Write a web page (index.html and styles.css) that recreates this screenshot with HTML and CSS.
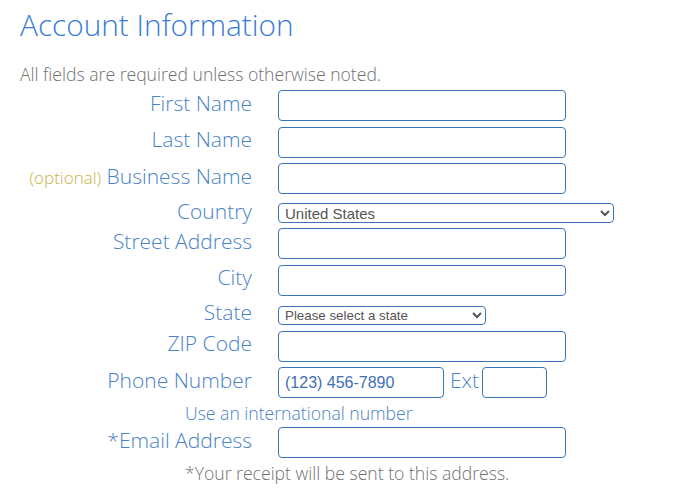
FILE: index.html
```html
<!DOCTYPE html>
<html>
<head>
<meta charset="utf-8">
<link rel="stylesheet" href="styles.css">
</head>
<body>
<div class="page">
  <h1 class="title">Account Information</h1>
  <p class="note">All fields are required unless otherwise noted.</p>
  <form class="form">
    <div class="row"><label class="label">First Name</label><input class="field" type="text"></div>
    <div class="row"><label class="label">Last Name</label><input class="field" type="text"></div>
    <div class="row"><label class="label"><span class="optional">(optional)</span> Business Name</label><input class="field" type="text"></div>
    <div class="row"><label class="label">Country</label><select class="select country"><option>United States</option></select></div>
    <div class="row"><label class="label">Street Address</label><input class="field" type="text"></div>
    <div class="row"><label class="label">City</label><input class="field" type="text"></div>
    <div class="row"><label class="label">State</label><select class="select state"><option>Please select a state</option></select></div>
    <div class="row"><label class="label">ZIP Code</label><input class="field" type="text"></div>
    <div class="row"><label class="label">Phone Number</label><input class="field phone" type="text" value="(123) 456-7890"><span class="ext-label">Ext</span><input class="field ext" type="text"></div>
    <p class="help intl">Use an international number</p>
    <div class="row"><label class="label">*Email Address</label><input class="field" type="text"></div>
    <p class="help receipt">*Your receipt will be sent to this address.</p>
  </form>
</div>
</body>
</html>
```
FILE: styles.css
```css
html, body {
  margin: 0;
  padding: 0;
  background: #ffffff;
}
body {
  margin: 8px;
  font-family: "Open Sans", "Liberation Sans", sans-serif;
}
.page {
  padding-left: 12px;
}
.title {
  margin: 0;
  font-family: "Open Sans", sans-serif;
  font-weight: 300;
  font-size: 29.8px;
  line-height: 34px;
  color: #3a7bd5;
}
.note {
  margin: 20px 0 4px 0;
  font-family: "Open Sans", sans-serif;
  font-weight: 300;
  font-size: 17.6px;
  line-height: 24px;
  color: #707070;
}
.form {
  margin: 0;
}
.row {
  display: flex;
  align-items: baseline;
  margin-bottom: 5.5px;
}
.label {
  flex: none;
  width: 232px;
  margin-right: 26px;
  text-align: right;
  font-family: "Open Sans", sans-serif;
  font-weight: 300;
  font-size: 21px;
  line-height: 22px;
  color: #4a82c6;
}
.optional {
  font-size: 17px;
  color: #c9b447;
}
.field {
  box-sizing: border-box;
  width: 288px;
  height: 31px;
  margin: 0;
  padding: 0 6px;
  border: 1px solid #3b73b9;
  border-radius: 4px;
  background: #fff;
  font-family: "Liberation Sans", Arial, sans-serif;
  font-size: 16px;
  color: #3f6fb5;
  outline: none;
}
.phone {
  width: 166px;
}
.ext-label {
  margin: 0 3px 0 6px;
  font-family: "Open Sans", sans-serif;
  font-weight: 300;
  font-size: 21px;
  line-height: 22px;
  color: #4a82c6;
}
.ext {
  width: 65px;
}
.select {
  box-sizing: border-box;
  margin: 0;
  padding: 0 2px;
  border: 1px solid #3b73b9;
  border-radius: 4px;
  background: #fff;
  font-family: "Liberation Sans", Arial, sans-serif;
  color: #555;
}
.country {
  width: 336px;
  height: 20px;
  font-size: 15px;
}
.state {
  width: 208px;
  height: 19px;
  font-size: 13.33px;
}
.help {
  margin: 0 0 0 165px;
  font-family: "Open Sans", sans-serif;
  font-weight: 300;
  font-size: 17.6px;
  line-height: 22px;
}
.intl {
  margin-top: -2px;
  margin-bottom: 3.5px;
  color: #4a82c6;
}
.receipt {
  margin-top: -1.5px;
  color: #707070;
}
```
